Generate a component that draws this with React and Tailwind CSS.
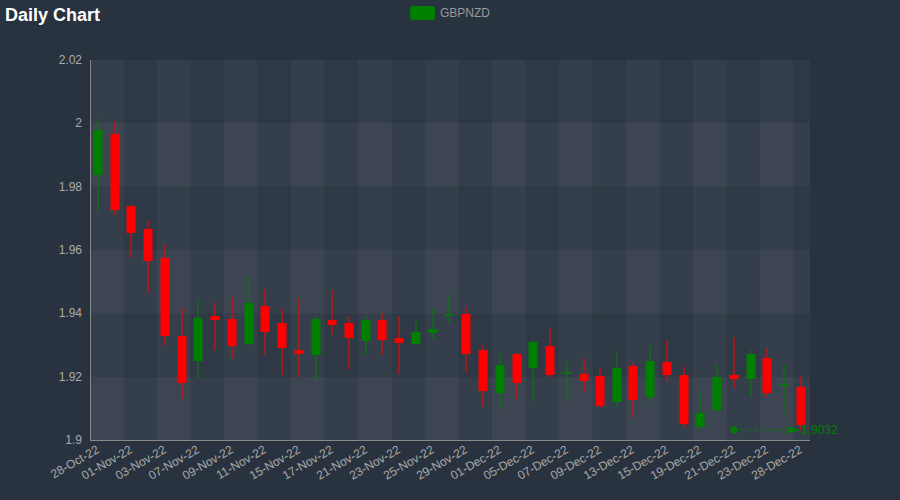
const C = [
[98,'g',130,175,119,212],[115,'r',134,210,121,215],[131,'r',206,233,205,258],[148,'r',229,261,220,293],
[165,'r',258,336,244,346],[182,'r',336,383,308,399],[198,'g',318,361,299,379],[215,'r',316,320,303,350],
[232,'r',319,346,297,358],[249,'g',303,344,275,346],[265,'r',306,332,289,355],[282,'r',323,348,309,375],
[299,'r',350,354,298,377],[316,'g',319,355,316,381],[332,'r',320,325,290,335],[349,'r',323,338,317,370],
[366,'g',320,341,315,355],[382,'r',320,340,313,355],[399,'r',338,343,316,374],[416,'g',332,344,321,345],
[433,'g',329,333,307,339],[449,'g',314,315,295,323],[466,'r',314,354,307,373],[483,'r',350,391,345,407],
[500,'g',365,393,353,409],[517,'r',354,383,353,399],[533,'g',342,368,340,402],[550,'r',346,375,328,378],
[567,'g',372,373,361,401],[584,'r',374,381,358,392],[600,'r',376,406,368,408],[617,'g',368,402,351,407],
[633,'r',366,400,362,417],[650,'g',361,397,345,402],[667,'r',362,375,340,381],[684,'r',375,424,367,428],
[700,'g',413,427,394,429],[717,'g',377,410,364,413],[734,'r',375,379,337,388],[751,'g',354,379,350,397],
[767,'r',358,393,348,397],[784,'g',384,385,364,415],[801,'r',387,425,376,431],
];
const labels = ['28-Oct-22','01-Nov-22','03-Nov-22','07-Nov-22','09-Nov-22','11-Nov-22','15-Nov-22','17-Nov-22','21-Nov-22','23-Nov-22','25-Nov-22','29-Nov-22','01-Dec-22','05-Dec-22','07-Dec-22','09-Dec-22','13-Dec-22','15-Dec-22','19-Dec-22','21-Dec-22','23-Dec-22','28-Dec-22'];
const yl = [['2.02',60],['2',123],['1.98',187],['1.96',250],['1.94',313],['1.92',377],['1.9',440]];

export default function App() {
  const vb = [];
  for (let k = 0; k < 22; k++) if (k % 2 === 0) vb.push(90 + k * 33.5);
  return (
    <div className="relative w-[900px] h-[500px] bg-[#29333f] overflow-hidden" style={{fontFamily:'"Liberation Sans", Arial, sans-serif'}}>
      <svg className="absolute inset-0" width="900" height="500">
        <rect x="90" y="60" width="720" height="380" fill="#2e3945" />
        {[123,250,377].map(y => <rect key={y} x="90" y={y} width="720" height="63.5" fill="rgba(255,255,255,0.035)" />)}
        {vb.map(x => <rect key={x} x={x} y="60" width="33.5" height="380" fill="rgba(255,255,255,0.035)" />)}
        <line x1="90.5" y1="60" x2="90.5" y2="441" stroke="#888" />
        <line x1="90" y1="440.5" x2="810" y2="440.5" stroke="#888" />
        {yl.map(([t,y]) => <text key={t} x="82" y={y+4} textAnchor="end" fontSize="12" fill="#aaa">{t}</text>)}
        {labels.map((t,i) => { const x = C[i*2][0]+2; return <text key={t} x={x} y="452" textAnchor="end" fontSize="12" fill="#aaa" transform={`rotate(-30 ${x} 452)`}>{t}</text>; })}
        {C.map(([x,c,o,cl,h,l]) => { const col = c==='g' ? '#008000' : '#ff0000'; return (
          <g key={x}>
            <line x1={x} y1={h} x2={x} y2={l} stroke={col} strokeWidth="1" />
            <rect x={x-4.5} y={o} width="9" height={Math.max(cl-o,1.5)} fill={col} />
          </g>); })}
        <circle cx="734" cy="430" r="3.5" fill="#008000" />
        <line x1="740" y1="430" x2="790" y2="430" stroke="#008000" strokeDasharray="4 3" />
        <path d="M786 426 L800 430 L786 434 L789 430 Z" fill="#008000" />
        <text x="801" y="434" fontSize="12" fill="#008000">1.9032</text>
      </svg>
      <div className="relative text-white font-bold text-[18px] pl-[5px] pt-[2px]">Daily Chart</div>
      <div className="absolute left-[410px] top-[4px] flex items-center gap-[5px]">
        <div className="w-[25px] h-[14px] rounded-[3px] bg-[#008000]" />
        <span className="text-[12px] text-[#999]">GBPNZD</span>
      </div>
    </div>
  );
}
